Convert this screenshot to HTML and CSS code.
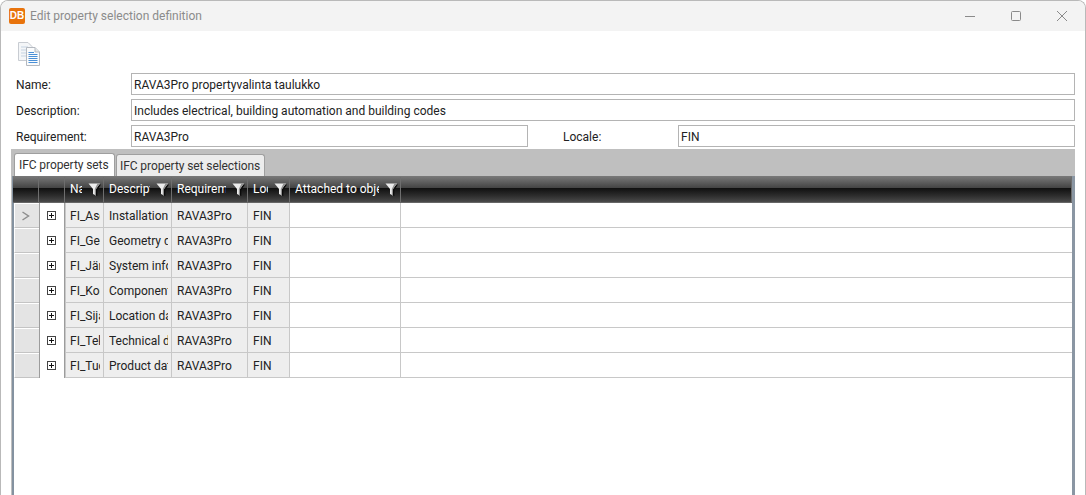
FILE: index.html
```html
<!DOCTYPE html>
<html lang="en">
<head>
<meta charset="utf-8">
<title>Edit property selection definition</title>
<link rel="stylesheet" href="styles.css">
</head>
<body>
<svg class="defs" width="0" height="0">
  <symbol id="funnel" viewBox="0 0 13 13">
    <path d="M2 1.500H13L9.300 7V13L6.500 11.500V7Z" fill="#0a0a0a"/>
    <path d="M0.500 0.500H12L8 6V12.500L5 11V6Z" fill="#ececec"/>
    <path d="M6.800 6V11.900L8 12.500V6L12 0.500H9.500Z" fill="#8f8f8f"/>
  </symbol>
  <symbol id="plus" viewBox="0 0 9 9">
    <rect x="0.500" y="0.500" width="8" height="8" fill="#fff" stroke="#444"/>
    <path d="M2 4.500H7M4.500 2V7" stroke="#111"/>
  </symbol>
</svg>
<div class="window">
  <header class="titlebar">
    <span class="logo">DB</span>
    <span class="title">Edit property selection definition</span>
    <div class="controls">
      <svg width="12" height="12" viewBox="0 0 12 12"><path d="M1 6.500H11" stroke="#8a8a8a"/></svg>
      <svg width="12" height="12" viewBox="0 0 12 12"><rect x="1.500" y="1.500" width="9" height="9" rx="1" fill="none" stroke="#8a8a8a"/></svg>
      <svg width="12" height="12" viewBox="0 0 12 12"><path d="M1 1L11 11M11 1L1 11" stroke="#8a8a8a"/></svg>
    </div>
  </header>
  <div class="toolbar">
    <svg width="24" height="26" viewBox="0 0 24 26">
      <path d="M1.500 1.500H11L15 5.500V19.500H1.500Z" fill="#f4f6f8" stroke="#c8ccd2"/>
      <path d="M4 6H11M4 9H11M4 12H11M4 15H11" stroke="#c5d3e2"/>
      <path d="M9.500 6.500H18L22.500 11V24.500H9.500Z" fill="#fafbfc" stroke="#b4b9c0"/>
      <path d="M18 6.500V11H22.500" fill="#e4e8ec" stroke="#b4b9c0"/>
      <path d="M11.500 11.500H17M11.500 13.500H20.500M11.500 15.500H20.500M11.500 17.500H20.500M11.500 19.500H20.500M11.500 21.500H20.500" stroke="#4a8fd6"/>
    </svg>
  </div>
  <div class="form">
    <label class="lbl">Name:</label>
    <div class="input wide">RAVA3Pro propertyvalinta taulukko</div>
    <label class="lbl">Description:</label>
    <div class="input wide">Includes electrical, building automation and building codes</div>
    <label class="lbl">Requirement:</label>
    <div class="input">RAVA3Pro</div>
    <label class="lbl locale">Locale:</label>
    <div class="input">FIN</div>
  </div>
  <section class="tabpanel">
    <div class="tabs">
      <div class="tab active">IFC property sets</div>
      <div class="tab">IFC property set selections</div>
    </div>
    <div class="grid">
      <div class="row head">
        <div class="hc"></div>
        <div class="hc"></div>
        <div class="hc"><span class="ht">Name</span><svg class="fn"><use href="#funnel"/></svg></div>
        <div class="hc"><span class="ht">Description</span><svg class="fn"><use href="#funnel"/></svg></div>
        <div class="hc"><span class="ht">Requirement</span><svg class="fn"><use href="#funnel"/></svg></div>
        <div class="hc"><span class="ht">Locale</span><svg class="fn"><use href="#funnel"/></svg></div>
        <div class="hc"><span class="ht">Attached to objects</span><svg class="fn"><use href="#funnel"/></svg></div>
        <div class="hc last"></div>
      </div>
      <div class="row">
        <div class="ind"><svg width="9" height="10" viewBox="0 0 9 10"><path d="M1.500 1L7.500 5L1.500 9" fill="none" stroke="#8f8f8f" stroke-width="1.500"/></svg></div>
        <div class="exp"><svg class="pl"><use href="#plus"/></svg></div>
        <div class="c first"><span class="t">FI_Asennus</span></div><div class="c"><span class="t">Installation data</span></div><div class="c"><span class="t">RAVA3Pro</span></div><div class="c"><span class="t">FIN</span></div><div class="c att"></div><div class="c fill"></div>
      </div>
      <div class="row">
        <div class="ind"></div><div class="exp"><svg class="pl"><use href="#plus"/></svg></div>
        <div class="c first"><span class="t">FI_Geometria</span></div><div class="c"><span class="t">Geometry data</span></div><div class="c"><span class="t">RAVA3Pro</span></div><div class="c"><span class="t">FIN</span></div><div class="c att"></div><div class="c fill"></div>
      </div>
      <div class="row">
        <div class="ind"></div><div class="exp"><svg class="pl"><use href="#plus"/></svg></div>
        <div class="c first"><span class="t">FI_Järjestelmä</span></div><div class="c"><span class="t">System information</span></div><div class="c"><span class="t">RAVA3Pro</span></div><div class="c"><span class="t">FIN</span></div><div class="c att"></div><div class="c fill"></div>
      </div>
      <div class="row">
        <div class="ind"></div><div class="exp"><svg class="pl"><use href="#plus"/></svg></div>
        <div class="c first"><span class="t">FI_Komponentti</span></div><div class="c"><span class="t">Component data</span></div><div class="c"><span class="t">RAVA3Pro</span></div><div class="c"><span class="t">FIN</span></div><div class="c att"></div><div class="c fill"></div>
      </div>
      <div class="row">
        <div class="ind"></div><div class="exp"><svg class="pl"><use href="#plus"/></svg></div>
        <div class="c first"><span class="t">FI_Sijainti</span></div><div class="c"><span class="t">Location data</span></div><div class="c"><span class="t">RAVA3Pro</span></div><div class="c"><span class="t">FIN</span></div><div class="c att"></div><div class="c fill"></div>
      </div>
      <div class="row">
        <div class="ind"></div><div class="exp"><svg class="pl"><use href="#plus"/></svg></div>
        <div class="c first"><span class="t">FI_Tekninen</span></div><div class="c"><span class="t">Technical data</span></div><div class="c"><span class="t">RAVA3Pro</span></div><div class="c"><span class="t">FIN</span></div><div class="c att"></div><div class="c fill"></div>
      </div>
      <div class="row">
        <div class="ind"></div><div class="exp"><svg class="pl"><use href="#plus"/></svg></div>
        <div class="c first"><span class="t">FI_Tuote</span></div><div class="c"><span class="t">Product data</span></div><div class="c"><span class="t">RAVA3Pro</span></div><div class="c"><span class="t">FIN</span></div><div class="c att"></div><div class="c fill"></div>
      </div>
    </div>
  </section>
</div>
</body>
</html>
```
FILE: styles.css
```css
* { box-sizing: border-box; }
html, body { margin: 0; padding: 0; height: 495px; overflow: hidden; background: #fff; }
body { font-family: Roboto, "Noto Sans", sans-serif; font-size: 12px; color: #1a1a1a; }
.defs { display: block; height: 0; }
.window { height: 495px; display: flex; flex-direction: column; border: 1px solid #b9b9b9; border-bottom: 0; border-radius: 8px 8px 0 0; overflow: hidden; background: #fff; }
.titlebar { height: 30px; flex: none; background: #f3f3f3; display: flex; align-items: center; padding-left: 8px; }
.logo { width: 16px; height: 16px; border-radius: 2px; background: #e8730c; color: #fff; font: bold 10px/16px "Liberation Sans", sans-serif; text-align: center; }
.title { margin-left: 5px; color: #8b8b8b; font-size: 12px; }
.controls { margin-left: auto; display: flex; gap: 34px; padding-right: 17px; }
.toolbar { height: 42px; flex: none; padding: 10px 0 0 16px; }
.toolbar svg { display: block; }
.form { flex: none; display: grid; grid-template-columns: 115px 397px 35px 115px 397px; grid-auto-rows: 22px; row-gap: 4px; padding-left: 15px; align-items: center; }
.lbl { line-height: 24px; height: 22px; color: #222; }
.input { height: 22px; border: 1px solid #b4b4b4; padding-left: 2px; line-height: 22px; white-space: nowrap; overflow: hidden; color: #222; }
.input.wide { grid-column: 2 / 6; }
.locale { grid-column: 3 / 5; padding-left: 35px; }
.tabpanel { flex: 1; min-height: 0; margin: 2px 10px 0 10px; background: #bfbfbf; display: flex; flex-direction: column; }
.tabs { height: 27px; flex: none; display: flex; align-items: flex-end; padding-left: 3px; gap: 1px; }
.tab { height: 22px; padding: 0 0 0 3px; width: 149px; border: 1px solid #9f9f9f; border-bottom: 0; border-radius: 3px 3px 0 0; background: #ececec; line-height: 22px; color: #333; white-space: nowrap; letter-spacing: -0.08px; }
.tab.active { height: 23px; width: 101px; background: #fff; padding: 0 0 0 4px; }
.grid { flex: 1; min-height: 0; margin-left: 1px; background: #fff; border-left: 2px solid #8492a0; border-right: 3px solid #8a96a3; }
.row { display: grid; grid-template-columns: 25px 26px 39px 68px 76px 42px 111px 1fr; grid-template-rows: 25px; height: 25px; }
.head { height: 27px; grid-template-rows: 25px; margin-left: -1px; background: linear-gradient(#757575 0, #434343 44%, #111 46%, #2d2d2d 75%, #4a4a4a 100%); border-top: 1px solid #777; border-bottom: 1px solid #666; grid-template-columns: 26px 26px 39px 68px 76px 42px 111px 1fr; }
.hc { display: flex; align-items: center; padding: 0 2px 1px 5px; border-right: 1px solid #6e6e6e; min-width: 0; }
.hc.last { border-right: 1px solid #6e6e6e; }
.ht { flex: 1; min-width: 0; overflow: hidden; white-space: nowrap; color: #fff; }
.fn { flex: none; width: 13px; height: 13px; margin-left: 6px; }
.ind { background: #e4e4e4; border: 1px solid #fff; border-right: 0; border-bottom: 1px solid #c4c4c4; display: flex; align-items: center; justify-content: center; padding-right: 3px; }
.exp { background: #fff; border-left: 1px solid #9c9c9c; border-right: 1px solid #9c9c9c; display: flex; align-items: center; justify-content: center; padding-right: 1px; }
.pl { width: 9px; height: 9px; }
.c { background: #eeeeee; border-right: 1px solid #c8c8c8; border-bottom: 1px solid #c8c8c8; line-height: 24px; padding: 1px 3px 0 5px; color: #222; overflow: hidden; }
.t { display: block; height: 23px; overflow: hidden; white-space: nowrap; }
.c.first { padding-left: 4px; border-left: 1px solid #c8c8c8; }
.c.att { background: #fff; }
.c.fill { background: #fff; border-right: 0; }
```
